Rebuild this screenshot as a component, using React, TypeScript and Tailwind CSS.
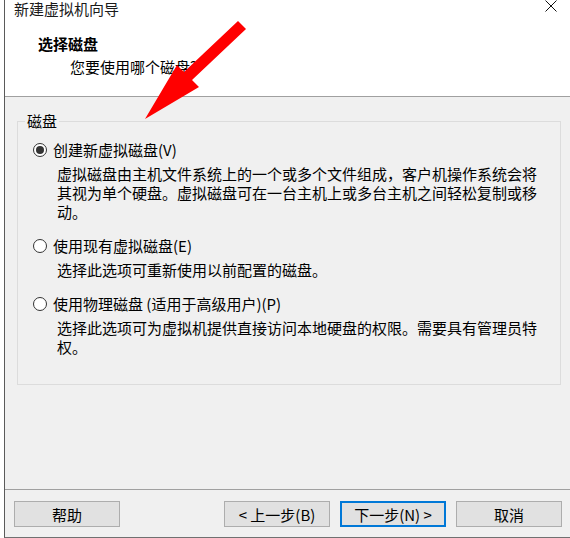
import { FC } from 'react';

const font = { fontFamily: '"Noto Sans CJK SC", "Noto Sans", sans-serif' };

const Radio: FC<{ checked?: boolean }> = ({ checked }) => (
  <span className="flex h-[14px] w-[14px] shrink-0 items-center justify-center rounded-full border border-[#333333] bg-white">
    {checked && <span className="h-[8px] w-[8px] rounded-full bg-[#333333]" />}
  </span>
);

const Option: FC<{ label: string; lines: string[]; checked?: boolean; first?: boolean }> = ({
  label,
  lines,
  checked,
  first,
}) => (
  <div className={first ? '' : 'mt-[15px]'}>
    <div className="flex items-center gap-[6px] pl-[15px] leading-[19px]">
      <Radio checked={checked} />
      <span>{label}</span>
    </div>
    <div className="mt-[5px] pl-[39px] leading-[19px]">
      {lines.map((line) => (
        <div key={line} className="whitespace-nowrap">
          {line}
        </div>
      ))}
    </div>
  </div>
);

const Button: FC<{ label: string; focused?: boolean }> = ({ label, focused }) => (
  <button
    className={
      focused
        ? 'flex h-[26px] w-[106px] items-center justify-center border-2 border-[#0078d7] bg-[#e1e1e1] text-[15px] leading-none text-black'
        : 'flex h-[26px] w-[106px] items-center justify-center border border-[#adadad] bg-[#e1e1e1] text-[15px] leading-none text-black'
    }>
    {label}
  </button>
);

export default function App() {
  return (
    <div className="relative h-[538px] w-[570px] overflow-hidden bg-white text-[15px] text-black" style={font}>
      <div className="ml-[4px] flex h-full flex-col border-b border-l border-b-[#707070] border-l-[#5a5a5a]">
        {/* header */}
        <div className="h-[97px] border-b border-[#a0a0a0] bg-white">
          <div className="flex h-[17px] items-start justify-between pl-[9px] pr-[13px]">
            <span className="pt-[1px] leading-[16px] text-[#1a1a1a]">新建虚拟机向导</span>
            <svg width="12" height="12" viewBox="0 0 12 12">
              <path d="M0.5 0.5 L11.5 11.5 M11.5 0.5 L0.5 11.5" stroke="#111" strokeWidth="1" fill="none" />
            </svg>
          </div>
          <div className="mt-[17px] pl-[33px] font-bold leading-[19px]">选择磁盘</div>
          <div className="mt-[4px] pl-[65px] leading-[19px]">您要使用哪个磁盘?</div>
        </div>

        {/* body */}
        <div className="flex-1 bg-[#f0f0f0]">
          <fieldset className="ml-[12px] mt-[14px] h-[274px] w-[544px] border border-[#dcdcdc] pt-[9px]">
            <legend className="ml-[7px] px-[2px] leading-[20px]">磁盘</legend>
            <Option
              first
              checked
              label="创建新虚拟磁盘(V)"
              lines={[
                '虚拟磁盘由主机文件系统上的一个或多个文件组成，客户机操作系统会将',
                '其视为单个硬盘。虚拟磁盘可在一台主机上或多台主机之间轻松复制或移',
                '动。',
              ]}
            />
            <Option label="使用现有虚拟磁盘(E)" lines={['选择此选项可重新使用以前配置的磁盘。']} />
            <Option
              label="使用物理磁盘 (适用于高级用户)(P)"
              lines={['选择此选项可为虚拟机提供直接访问本地硬盘的权限。需要具有管理员特', '权。']}
            />
          </fieldset>
        </div>

        {/* footer */}
        <div className="flex h-[48px] items-start justify-between border-t border-[#a0a0a0] bg-[#f0f0f0] pl-[9px] pr-[8px] pt-[11px]">
          <Button label="帮助" />
          <div className="flex gap-[10px]">
            <Button label="< 上一步(B)" />
            <Button focused label="下一步(N) >" />
            <Button label="取消" />
          </div>
        </div>
      </div>

      {/* red annotation arrow */}
      <svg className="pointer-events-none absolute left-0 top-0" width="570" height="538">
        <polygon points="238,21 246,29 192,80 199,87 145,119 177,65 184,72" fill="#ff0000" />
      </svg>
    </div>
  );
}
